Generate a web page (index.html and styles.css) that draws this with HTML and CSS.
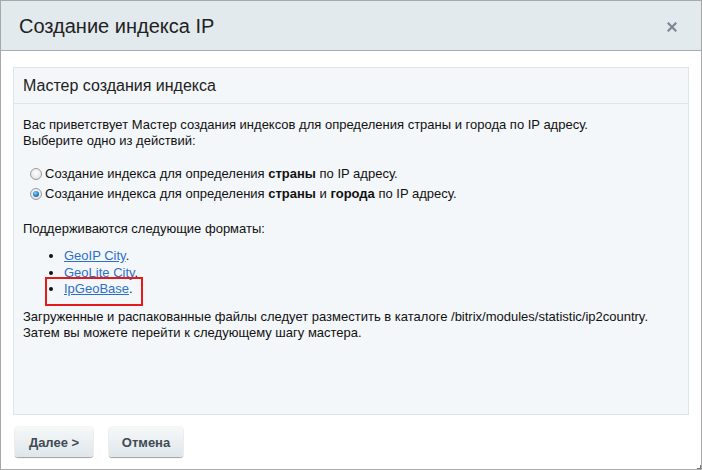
FILE: index.html
```html
<!DOCTYPE html>
<html lang="ru">
<head>
<meta charset="utf-8">
<link rel="stylesheet" href="styles.css">
</head>
<body>
<div class="dialog">
  <div class="dlg-head">
    <span class="dlg-title">Создание индекса IP</span>
    <span class="dlg-close">
      <svg width="10" height="10" viewBox="0 0 10 10"><path d="M1.5 1.5 L8.5 8.5 M8.5 1.5 L1.5 8.5" stroke="#7b8793" stroke-width="2.2" stroke-linecap="square"/></svg>
    </span>
  </div>
  <div class="dlg-content">
    <div class="panel">
      <div class="panel-head">Мастер создания индекса</div>
      <div class="panel-body">
        <p class="intro">Вас приветствует Мастер создания индексов для определения страны и города по IP адресу.<br>Выберите одно из действий:</p>
        <div class="options">
          <label class="opt"><span class="radio"></span><span>Создание индекса для определения <b>страны</b> по IP адресу.</span></label>
          <label class="opt"><span class="radio checked"></span><span>Создание индекса для определения <b>страны</b> и <b>города</b> по IP адресу.</span></label>
        </div>
        <p class="formats">Поддерживаются следующие форматы:</p>
        <ul class="list">
          <li><a href="#">GeoIP City</a>.</li>
          <li><a href="#">GeoLite City</a>.</li>
          <li class="marked"><a href="#">IpGeoBase</a>.</li>
        </ul>
        <p class="note">Загруженные и распакованные файлы следует разместить в каталоге /bitrix/modules/statistic/ip2country.<br>Затем вы можете перейти к следующему шагу мастера.</p>
      </div>
    </div>
    <div class="buttons">
      <button class="btn btn-next">Далее &gt;</button>
      <button class="btn btn-cancel">Отмена</button>
    </div>
  </div>
  <span class="grip"></span>
</div>
</body>
</html>
```
FILE: styles.css
```css
html, body { margin: 0; padding: 0; background: #fff; }
body { font-family: "Liberation Sans", Arial, sans-serif; color: #000; }
.dialog {
  position: relative;
  box-sizing: border-box;
  width: 702px;
  height: 470px;
  border: 1px solid #a8a8a8;
  background: #fff;
}
.dlg-head {
  height: 49px;
  background: #e2eaed;
  border-bottom: 1px solid #a9adb0;
  display: flex;
  align-items: center;
  justify-content: space-between;
  padding: 0 24px 0 18px;
}
.dlg-title { font-size: 20px; color: #222; padding-top: 1px; }
.dlg-close { display: flex; padding-top: 2px; }
.dlg-content { padding: 16px 12px 0 12px; }
.panel {
  border: 1px solid #dce5ea;
  background: #f4f7f9;
  height: 348px;
  box-sizing: border-box;
}
.panel-head {
  height: 35px;
  border-bottom: 1px solid #dce5ea;
  display: flex;
  align-items: center;
  padding-left: 9px;
  font-size: 16px;
  color: #222;
}
.panel-body { padding: 13px 9px 0 9px; font-size: 13px; line-height: 16px; color: #111; }
.panel-body p { margin: 0; }
.options { margin-top: 17px; display: flex; flex-direction: column; gap: 4px; }
.opt { display: flex; align-items: center; height: 16px; padding-left: 7px; }
.radio {
  width: 12px; height: 12px; border-radius: 50%;
  border: 1px solid #9a9a9a;
  background: radial-gradient(circle at 50% 40%, #fff 0%, #e8e8e8 65%, #cfcfcf 100%);
  margin-right: 3px;
  box-sizing: border-box;
  position: relative;
  flex: none;
}
.radio.checked::after {
  content: "";
  position: absolute; left: 2px; top: 2px;
  width: 6px; height: 6px; border-radius: 50%;
  background: radial-gradient(circle at 40% 35%, #7fd0ff 0%, #1b78c4 60%, #0c4f8a 100%);
}
.panel-body .formats { margin-top: 19px; }
.list { margin: 11px 0 0 0; padding-left: 41px; line-height: 16.5px; }
.list li { position: relative; }
.list a { color: #2b6fcb; text-decoration: underline; }
.list li.marked::before {
  content: "";
  position: absolute;
  left: -19px; top: -4px;
  width: 94px; height: 25px;
  border: 2px solid #e41b1b;
}
.panel-body .note { margin-top: 11px; }
.buttons { display: flex; gap: 16px; padding: 12px 0 0 2px; }
.btn {
  height: 30px;
  border: none;
  border-radius: 3px;
  background: linear-gradient(#f6f8f9, #dfe6ea);
  box-shadow: 0 1px 1px rgba(0,0,0,0.35), 0 0 0 1px rgba(0,0,0,0.04);
  font-family: "Liberation Sans", Arial, sans-serif;
  font-size: 13px;
  font-weight: bold;
  color: #3f4b54;
  padding: 0;
}
.btn-next { width: 78px; }
.btn-cancel { width: 74px; }
.grip {
  position: absolute; right: 0; bottom: 0;
  width: 3px; height: 3px;
  border-right: 1px solid #777; border-bottom: 1px solid #777;
}
```
